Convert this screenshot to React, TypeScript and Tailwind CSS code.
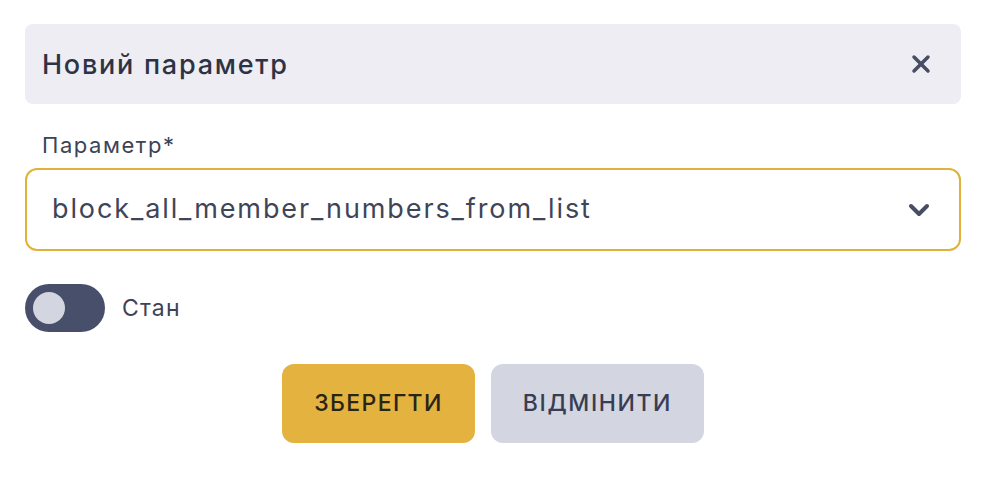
import { X, ChevronDown } from 'lucide-react';

export default function App() {
    return (
        <div className="w-[982px] h-[482px] bg-white pt-6 pl-[25px]" style={{ fontFamily: 'Inter, "Noto Sans", sans-serif' }}>
            <div className="w-[936px]">
                <div className="h-20 rounded-lg bg-[#ededf3] flex items-center justify-between pl-[17px] pr-[26px]">
                    <h2 className="text-[27px] font-medium text-[#2d3343] tracking-[0.065em] pt-0.5">Новий параметр</h2>
                    <X className="w-7 h-7 text-[#474d63]" strokeWidth={3} />
                </div>

                <div className="mt-[29px] pl-[17px] text-[22px] text-[#3d4356] leading-6 tracking-[0.07em]">Параметр*</div>

                <div className="mt-[11px] h-[83px] rounded-xl border-2 border-[#e2b13c] flex items-center justify-between pl-[25px] pr-[24px]">
                    <span className="text-[27px] text-[#3f4558] tracking-[0.07em]">block_all_member_numbers_from_list</span>
                    <ChevronDown className="w-8 h-8 text-[#474d63]" strokeWidth={3} />
                </div>

                <div className="mt-[33px] flex items-center gap-[17px]">
                    <div className="w-20 h-12 rounded-full bg-[#474f6b] flex items-center pl-2">
                        <div className="w-8 h-8 rounded-full bg-[#d3d5e1]" />
                    </div>
                    <span className="text-[23px] text-[#3d4356] tracking-[0.05em]">Стан</span>
                </div>

                <div className="mt-8 flex justify-center gap-4">
                    <button className="w-[193px] h-[79px] rounded-xl bg-[#e3b23f] text-[23px] font-medium text-[#2a2416] tracking-[0.06em]">ЗБЕРЕГТИ</button>
                    <button className="w-[213px] h-[79px] rounded-xl bg-[#d3d5e1] text-[23px] font-medium text-[#373d52] tracking-[0.07em]">ВІДМІНИТИ</button>
                </div>
            </div>
        </div>
    );
}
